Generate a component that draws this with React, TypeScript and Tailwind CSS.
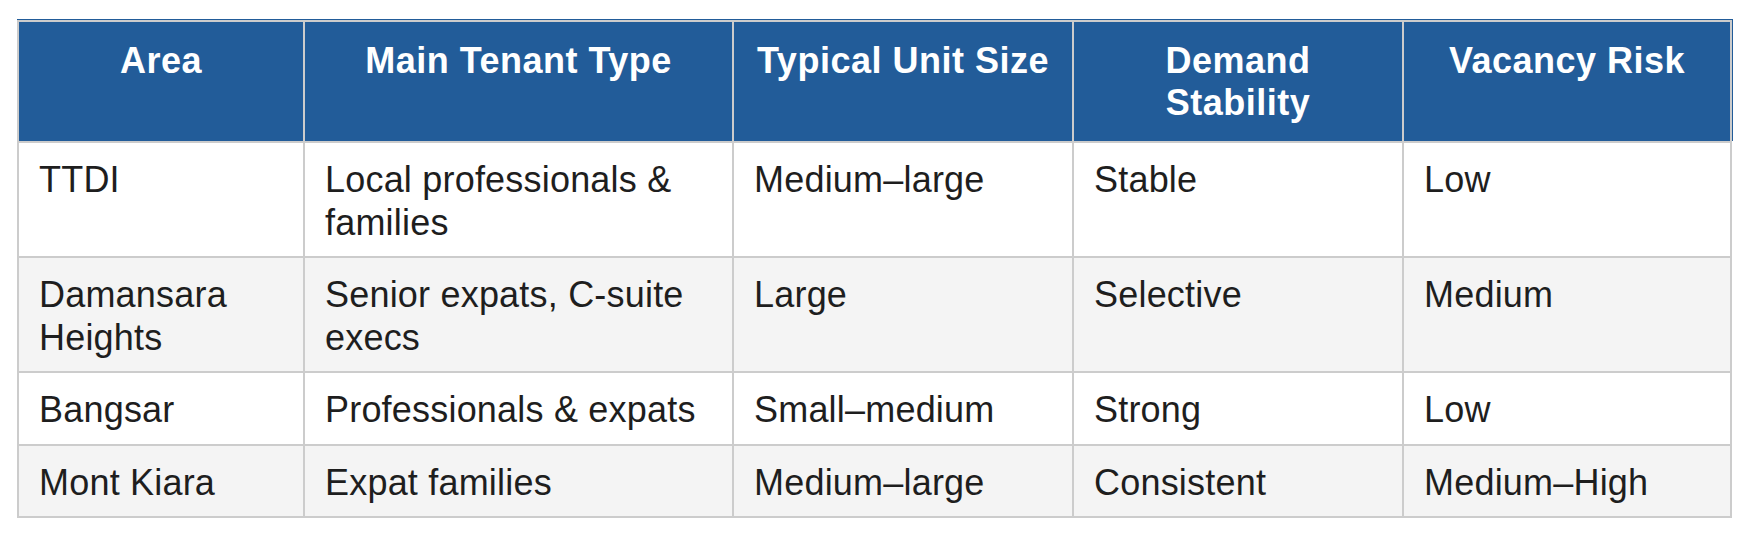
import React from "react";

const headers = [
  "Area",
  "Main Tenant Type",
  "Typical Unit Size",
  "Demand Stability",
  "Vacancy Risk",
];

const rows: string[][] = [
  ["TTDI", "Local professionals & families", "Medium–large", "Stable", "Low"],
  ["Damansara Heights", "Senior expats, C-suite execs", "Large", "Selective", "Medium"],
  ["Bangsar", "Professionals & expats", "Small–medium", "Strong", "Low"],
  ["Mont Kiara", "Expat families", "Medium–large", "Consistent", "Medium–High"],
];

export default function App() {
  return (
    <div
      className="min-h-[544px] w-[1755px] bg-white pt-[19px] pl-[17px]"
      style={{ fontFamily: '"Liberation Sans", Arial, Helvetica, sans-serif' }}
    >
      <div className="w-[1716px] border-t border-[#225c99] pr-[1px] bg-[linear-gradient(to_bottom,#225c99_0,#225c99_121px,transparent_121px)]">
        <div className="grid w-[1715px] grid-cols-[286px_429px_340px_330px_328px] border-r-2 border-b-2 border-[#cccccc] bg-white">
          {headers.map((h) => (
            <div
              key={h}
              className="border-l-2 border-t-2 border-[#cccccc] bg-[#225c99] px-5 pt-[18px] pb-[17px] text-center text-[36px] font-bold leading-[42px] tracking-[0.5px] text-white"
            >
              {h === "Demand Stability" ? (
                <>
                  Demand
                  <br />
                  Stability
                </>
              ) : (
                h
              )}
            </div>
          ))}
          {rows.map((r, i) =>
            r.map((c, j) => (
              <div
                key={`${i}-${j}`}
                className={`border-l-2 border-t-2 border-[#cccccc] pl-5 pr-3 pt-[16px] pb-[12px] text-[36px] leading-[42.5px] tracking-[0.2px] text-[#1e1e1e] ${
                  i % 2 === 1 ? "bg-[#f4f4f4]" : "bg-white"
                }`}
              >
                {c}
              </div>
            ))
          )}
        </div>
      </div>
    </div>
  );
}
